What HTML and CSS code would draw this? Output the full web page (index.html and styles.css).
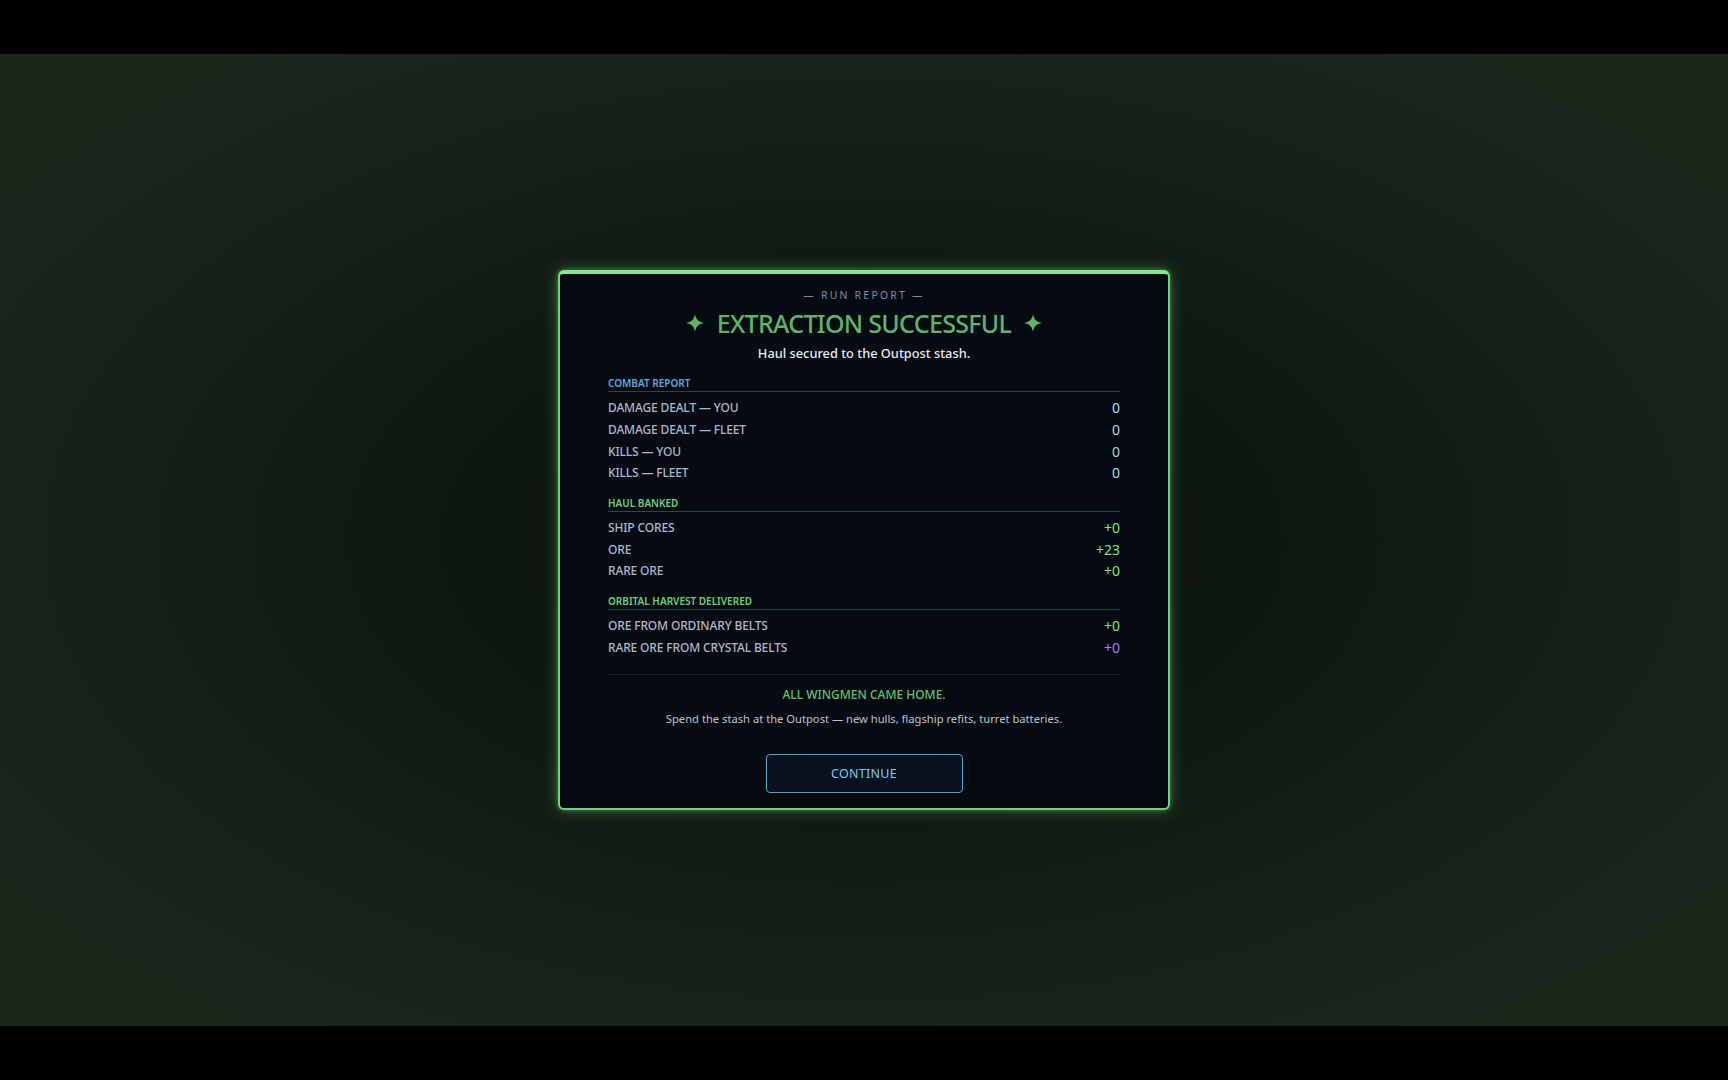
FILE: index.html
```html
<!DOCTYPE html>
<html lang="en">
<head>
<meta charset="utf-8">
<title>Run Report</title>
<link rel="stylesheet" href="styles.css">
</head>
<body>
<div class="stage">
  <div class="modal">
    <div class="kicker">— RUN REPORT —</div>
    <h1 class="title">
      <svg class="star" viewBox="0 0 20 20" aria-hidden="true"><path d="M10 0 C11 6 14 9 20 10 C14 11 11 14 10 20 C9 14 6 11 0 10 C6 9 9 6 10 0 Z"/></svg>
      <span class="title-text">EXTRACTION SUCCESSFUL</span>
      <svg class="star" viewBox="0 0 20 20" aria-hidden="true"><path d="M10 0 C11 6 14 9 20 10 C14 11 11 14 10 20 C9 14 6 11 0 10 C6 9 9 6 10 0 Z"/></svg>
    </h1>
    <p class="subtitle">Haul secured to the Outpost stash.</p>

    <section class="section first">
      <h2 class="sec-head blue">COMBAT REPORT</h2>
      <div class="rows">
        <div class="row"><span class="label">DAMAGE DEALT — YOU</span><span class="val v-blue">0</span></div>
        <div class="row"><span class="label">DAMAGE DEALT — FLEET</span><span class="val v-blue">0</span></div>
        <div class="row"><span class="label">KILLS — YOU</span><span class="val v-blue">0</span></div>
        <div class="row"><span class="label">KILLS — FLEET</span><span class="val v-blue">0</span></div>
      </div>
    </section>

    <section class="section">
      <h2 class="sec-head green">HAUL BANKED</h2>
      <div class="rows">
        <div class="row"><span class="label">SHIP CORES</span><span class="val v-green">+0</span></div>
        <div class="row"><span class="label">ORE</span><span class="val v-green">+23</span></div>
        <div class="row"><span class="label">RARE ORE</span><span class="val v-green">+0</span></div>
      </div>
    </section>

    <section class="section">
      <h2 class="sec-head green">ORBITAL HARVEST DELIVERED</h2>
      <div class="rows">
        <div class="row"><span class="label">ORE FROM ORDINARY BELTS</span><span class="val v-green">+0</span></div>
        <div class="row"><span class="label">RARE ORE FROM CRYSTAL BELTS</span><span class="val v-purple">+0</span></div>
      </div>
    </section>

    <div class="footer">
      <p class="wingmen">ALL WINGMEN CAME HOME.</p>
      <p class="hint">Spend the stash at the Outpost — new hulls, flagship refits, turret batteries.</p>
      <button class="btn" type="button">CONTINUE</button>
    </div>
  </div>
</div>
</body>
</html>
```

FILE: styles.css
```css
* { box-sizing: border-box; }

html, body {
  margin: 0;
  padding: 0;
  height: 100%;
  background: #000;
}

body {
  display: flex;
  align-items: center;
  justify-content: center;
  font-family: "Noto Sans", "Open Sans", "DejaVu Sans", sans-serif;
}

.stage {
  width: 1728px;
  height: 972px;
  display: flex;
  align-items: center;
  justify-content: center;
  background: radial-gradient(ellipse 62% 62% at 50% 50%, #0a100b 0%, #0e170f 35%, #151f16 65%, #1a281c 100%);
}

.modal {
  width: 612px;
  padding: 14px 48px 15px;
  background: #060a12;
  border: 2px solid #6fd27d;
  border-top: 4px solid #86e592;
  border-radius: 6px;
  box-shadow: 0 0 16px rgba(110, 225, 125, 0.35), 0 0 4px rgba(130, 240, 140, 0.4);
  text-align: center;
}

.kicker {
  font-size: 10.5px;
  line-height: 14px;
  letter-spacing: 2.2px;
  color: #7b87a2;
}

.title {
  margin: 5px 0 0;
  display: flex;
  align-items: center;
  justify-content: center;
  gap: 13px;
  font-size: 25px;
  line-height: 32px;
  font-weight: 500;
  color: #5db569;
  letter-spacing: -0.7px;
}

.star {
  width: 18px;
  height: 18px;
  fill: #5db569;
  flex: none;
}

.subtitle {
  margin: 4px 0 0;
  font-size: 12.8px;
  line-height: 20px;
  color: #e4eaf0;
  font-weight: 500;
}

.section {
  margin-top: 13px;
  text-align: left;
}

.section.first { margin-top: 14px; }

.sec-head {
  margin: 0;
  font-size: 10px;
  line-height: 13px;
  font-weight: 600;
  padding-bottom: 1px;
  border-bottom: 1px solid #2b4636;
}

.sec-head.blue { color: #5aa6e0; }
.sec-head.green { color: #68d077; }

.rows { padding-top: 5px; }

.row {
  display: flex;
  justify-content: space-between;
  align-items: center;
  height: 21.7px;
}

.label {
  font-size: 12px;
  color: #acb6c9;
  font-weight: 500;
  letter-spacing: -0.15px;
}

.val {
  font-size: 14px;
}

.v-blue { color: #a6d6ef; }
.v-green { color: #7ee283; }
.v-purple { color: #a27af2; }

.footer {
  margin-top: 16px;
  padding-top: 11px;
  border-top: 1px solid #1b232d;
  display: flex;
  flex-direction: column;
  align-items: center;
}

.wingmen {
  margin: 0;
  font-size: 12px;
  line-height: 18px;
  font-weight: 500;
  color: #5fc06b;
}

.hint {
  margin: 7px 0 0;
  font-size: 11.2px;
  line-height: 16px;
  color: #b9c2d0;
}

.btn {
  margin-top: 27px;
  width: 197px;
  height: 39px;
  background: #0a1220;
  border: 1px solid #4ea6c9;
  border-radius: 4px;
  color: #74cdf0;
  font-family: inherit;
  font-size: 12.5px;
  font-weight: 400;
  letter-spacing: 0.3px;
  cursor: pointer;
}
```
